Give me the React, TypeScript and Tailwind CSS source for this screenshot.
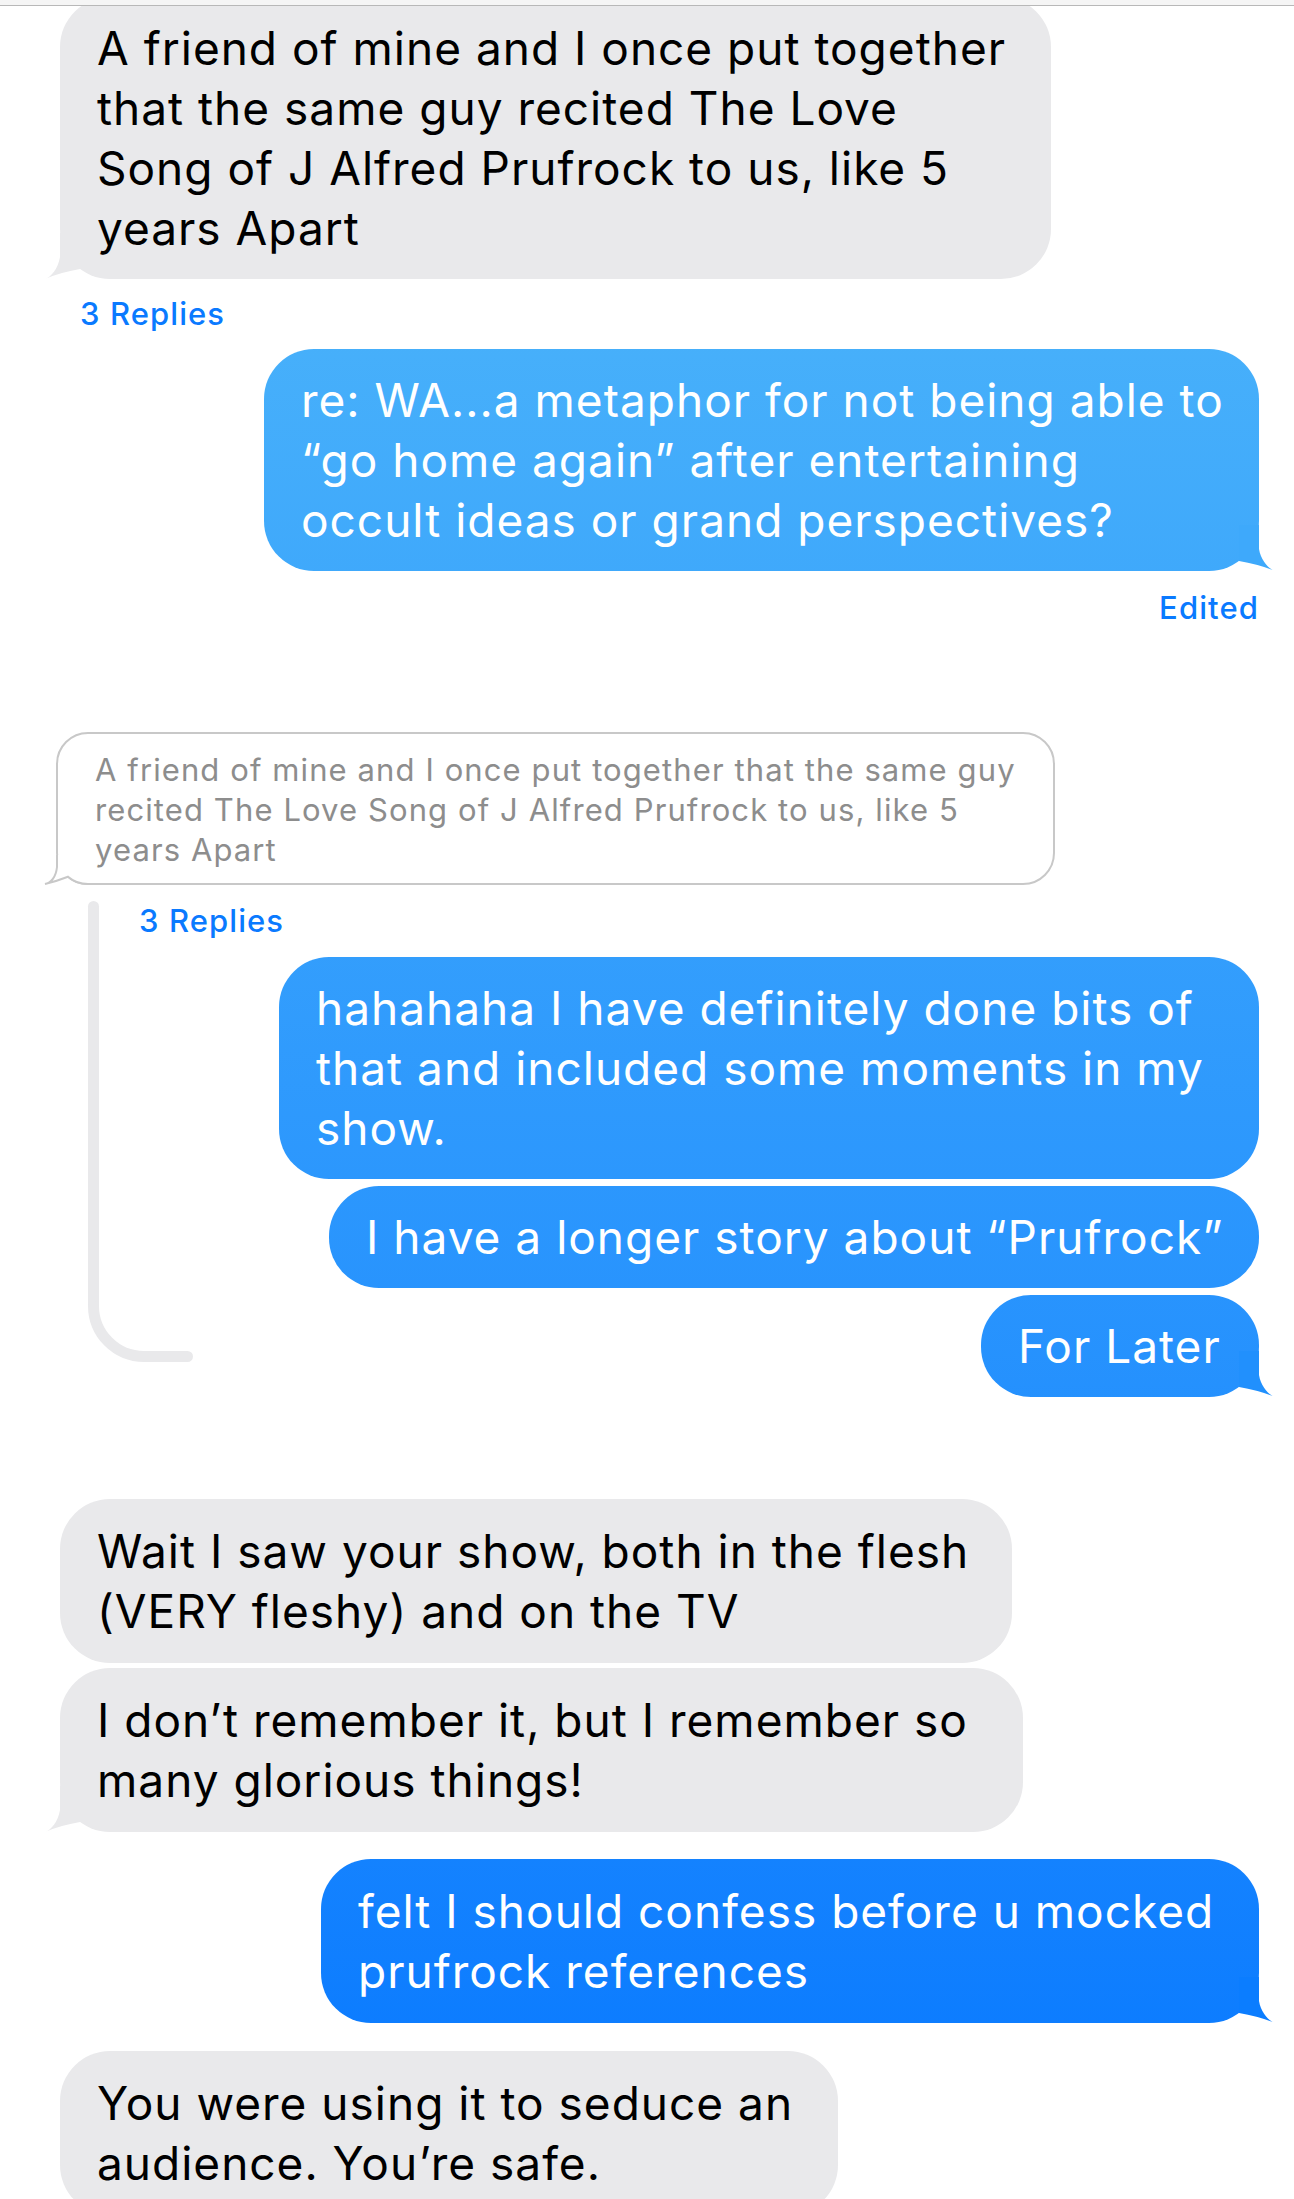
import React from 'react';
import clsx from 'clsx';

type Msg = {
  id: string;
  me: boolean;
  lines: string[];
  className: string;
  tail?: boolean;
  tailColor?: string;
};

// Tail on the bottom-right of an outgoing bubble
function TailRight({ color }: { color: string }) {
  return (
    <svg className="absolute bottom-0 right-[-17px]" width="37" height="46" viewBox="-20 -46 37 46">
      <path d="M-20 -46 L0 -46 L0 -22 C2 -10 10 -2 16 0 Q0 -6.6 -20 -10 Z" fill={color} />
    </svg>
  );
}

// Tail on the bottom-left of an incoming bubble
function TailLeft() {
  return (
    <svg className="absolute bottom-0 left-[-16px]" width="36" height="46" viewBox="-16 -46 36 46">
      <path d="M20 -46 L0 -46 L0 -22 C-2 -10 -9 -2 -15 0 Q0 -6.6 20 -10 Z" fill="#e9e9eb" />
    </svg>
  );
}

function Bubble({ me, lines, className, tail, tailColor }: Msg) {
  return (
    <div
      className={clsx(
        'relative rounded-[50px] px-[37px] text-[46px] leading-[60px] tracking-[1px]',
        me
          ? 'self-end bg-fixed bg-linear-to-b from-[#51b9f9] to-[#0577ff] text-white'
          : 'self-start bg-[#e9e9eb] text-black',
        lines.length === 2 ? 'py-[22px]' : 'py-[21px]',
        className
      )}
    >
      {lines.map((l) => (
        <div key={l} className="whitespace-nowrap">
          {l}
        </div>
      ))}
      {tail && (me ? <TailRight color={tailColor ?? '#0b7dff'} /> : <TailLeft />)}
    </div>
  );
}

function Replies({ className }: { className: string }) {
  return (
    <div className={clsx('text-[31px] font-medium leading-[40px] tracking-[1.1px] text-[#0a7aff]', className)}>
      3 Replies
    </div>
  );
}

const threadReplies: Msg[] = [
  {
    id: 'r1',
    me: true,
    lines: ['hahahaha I have definitely done bits of', 'that and included some moments in my', 'show.'],
    className: 'mt-[16px] w-[980px]',
  },
  {
    id: 'r2',
    me: true,
    lines: ['I have a longer story about “Prufrock”'],
    className: 'mt-[7px] w-[930px]',
  },
  {
    id: 'r3',
    me: true,
    lines: ['For Later'],
    className: 'mt-[7px] w-[278px]',
    tail: true,
    tailColor: '#2190fd',
  },
];

const later: Msg[] = [
  {
    id: 'm6',
    me: false,
    lines: ['Wait I saw your show, both in the flesh', '(VERY fleshy) and on the TV'],
    className: 'mt-[102px] w-[952px]',
  },
  {
    id: 'm7',
    me: false,
    lines: ['I don’t remember it, but I remember so', 'many glorious things!'],
    className: 'mt-[5px] w-[963px]',
    tail: true,
  },
  {
    id: 'm8',
    me: true,
    lines: ['felt I should confess before u mocked', 'prufrock references'],
    className: 'mt-[27px] w-[938px]',
    tail: true,
    tailColor: '#0b7dff',
  },
  {
    id: 'm9',
    me: false,
    lines: ['You were using it to seduce an', 'audience. You’re safe.'],
    className: 'mt-[28px] w-[778px]',
  },
];

export default function App() {
  return (
    <div className="relative min-h-screen overflow-hidden bg-white font-['Inter',sans-serif] antialiased">
      <div className="fixed inset-x-0 top-0 z-10 h-[6px] border-b border-[#b8b8b8] bg-[#f5f5f5]" />

      <div className="mt-[-3px] flex flex-col pb-[80px] pl-[60px] pr-[35px]">
        <Bubble
          id="m1"
          me={false}
          lines={[
            'A friend of mine and I once put together',
            'that the same guy recited The Love',
            'Song of J Alfred Prufrock to us, like 5',
            'years Apart',
          ]}
          className="w-[991px]"
          tail
        />
        <Replies className="mt-[15px] pl-[20px]" />

        <Bubble
          id="m2"
          me
          lines={[
            're: WA...a metaphor for not being able to',
            '“go home again” after entertaining',
            'occult ideas or grand perspectives?',
          ]}
          className="mt-[15px] w-[995px]"
          tail
          tailColor="#3ea9fb"
        />
        <div className="mt-[17px] self-end text-[31px] font-medium leading-[40px] tracking-[1.1px] text-[#0a7aff]">
          Edited
        </div>

        {/* quoted thread origin */}
        <div className="relative mt-[104px] ml-[-4px] w-[999px] rounded-[32px] border-2 border-[#c8c8c8] pb-[13px] pl-[37px] pr-[30px] pt-[16px] text-[31px] leading-[40px] tracking-[1.1px] text-[#8d8d8d]">
          <div className="whitespace-nowrap">A friend of mine and I once put together that the same guy</div>
          <div className="whitespace-nowrap">recited The Love Song of J Alfred Prufrock to us, like 5</div>
          <div className="whitespace-nowrap">years Apart</div>
          <svg className="absolute bottom-[-2px] left-[-15px] overflow-visible" width="47" height="34" viewBox="-13 -34 47 34">
            <path d="M1 -30 L1 -18 C0 -8 -5 -2 -11 -1 Q1 -4 12 -8.3 A31 31 0 0 0 32 -1 L32 -30 Z" fill="#ffffff" />
            <path
              d="M1 -30 L1 -18 C0 -8 -5 -2 -11 -1 Q1 -4 12 -8.3 A31 31 0 0 0 32 -1"
              fill="none"
              stroke="#c8c8c8"
              strokeWidth="2"
            />
          </svg>
        </div>

        {/* thread */}
        <div className="mt-[16px] ml-[-60px] flex">
          <div className="flex w-[105px] shrink-0 flex-col pb-[35px] pl-[88px]">
            <div className="w-[11px] flex-1 rounded-t-full bg-[#e9e9eb]" />
            <svg className="shrink-0 overflow-visible" width="105" height="56" viewBox="0 0 105 56">
              <path
                d="M5.5 0 A50.5 50.5 0 0 0 56 50.5 H99.5"
                fill="none"
                stroke="#e9e9eb"
                strokeWidth="11"
                strokeLinecap="round"
              />
            </svg>
          </div>
          <div className="flex flex-1 flex-col">
            <Replies className="pl-[34px]" />
            {threadReplies.map((m) => (
              <Bubble key={m.id} {...m} />
            ))}
          </div>
        </div>

        {later.map((m) => (
          <Bubble key={m.id} {...m} />
        ))}
      </div>
    </div>
  );
}
